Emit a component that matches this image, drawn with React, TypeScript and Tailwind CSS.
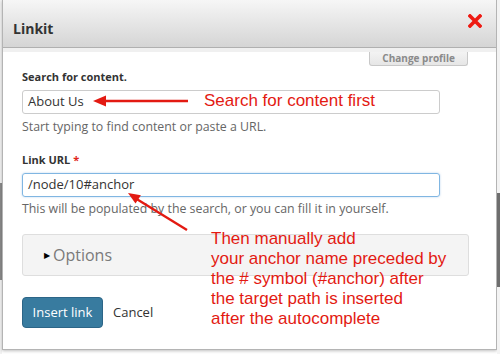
const UI = { fontFamily: '"Open Sans", "Noto Sans", sans-serif' };
const NOTE = { fontFamily: '"Liberation Sans", Arial, sans-serif' };

function CloseIcon() {
  return (
    <svg width="14" height="14" viewBox="0 0 14 14">
      <path d="M2 2 L12 12 M12 2 L2 12" stroke="#ee1a12" strokeWidth="3.6" strokeLinecap="square" />
    </svg>
  );
}

function Arrows() {
  return (
    <svg className="absolute left-0 top-0 pointer-events-none" width="500" height="354" viewBox="0 0 500 354">
      <line x1="188" y1="101" x2="102" y2="101" stroke="#e31a12" strokeWidth="2.5" />
      <polygon points="93,101 106,95.5 106,106.5" fill="#e31a12" />
      <line x1="187" y1="230" x2="135" y2="198" stroke="#e31a12" strokeWidth="2.5" />
      <polygon points="128,193 140.9,195.2 135.5,203.6" fill="#e31a12" />
    </svg>
  );
}

export default function App() {
  return (
    <div className="relative w-[500px] h-[354px] overflow-hidden bg-white flex" style={UI}>
      {/* page behind the dialog */}
      <div className="w-[2px] flex flex-col bg-[#f2f2f2]">
        <div className="h-[183px]" />
        <div className="h-[97px] bg-[#8a8a8a]" />
      </div>

      <div className="w-[495px] h-[350px] bg-white border-x border-b border-[#b4b4b4] shadow-[0_1px_3px_rgba(0,0,0,0.25)] flex flex-col">
        <div className="h-[48px] flex justify-between border-b border-[#b0b0b0] bg-gradient-to-b from-[#f6f6f6] to-[#d5d5d5]">
          <div className="pl-[10px] pt-[19px] text-[14px] leading-[20px] font-bold text-[#333]">Linkit</div>
          <div className="mt-[14px] mr-[14px]">
            <CloseIcon />
          </div>
        </div>
        <div className="h-[4px] bg-[#f0f0f0]" />

        <div className="flex justify-end pr-[28px]">
          <div className="h-[14px] px-[12px] flex items-center rounded-b-[3px] border-x border-b border-[#c8c8c8] bg-gradient-to-b from-[#f3f3f3] to-[#e6e6e6] text-[10px] font-bold text-[#8a8a8a]">
            Change profile
          </div>
        </div>

        <div className="px-[19px] flex flex-col">
          <div className="mt-[3px] text-[11px] leading-[16px] font-bold text-[#333]">Search for content.</div>
          <div className="mt-[5px] w-[418px] h-[24px] flex items-center pl-[5px] border border-[#cccccc] rounded-[3px] text-[13px] text-[#333]">
            About Us
          </div>
          <div className="mt-[4px] text-[12.35px] leading-[17px] text-[#666]">Start typing to find content or paste a URL.</div>

          <div className="mt-[17px] text-[11px] leading-[16px] font-bold text-[#333]">
            Link URL <span className="text-[#e0241b]">*</span>
          </div>
          <div className="mt-[5px] w-[418px] h-[24px] flex items-center pl-[5px] border border-[#80b6e2] rounded-[3px] shadow-[0_0_2px_rgba(100,160,220,0.5)] text-[13px] text-[#333]">
            /node/10#anchor
          </div>
          <div className="mt-[3px] text-[12.35px] leading-[17px] text-[#666]">
            This will be populated by the search, or you can fill it in yourself.
          </div>

          <div className="mt-[17px] w-[447px] h-[42px] flex items-center pl-[21px] bg-[#f4f4f4] border border-[#dedede] rounded-[3px]">
            <span className="text-[8px] text-black mr-[3px]">▶</span>
            <span className="text-[16px] text-[#7a7a7a]">Options</span>
          </div>

          <div className="mt-[21px] flex items-center">
            <div className="w-[81px] h-[31px] flex items-center justify-center rounded-[4px] bg-[#387b9f] border border-[#2c6587] text-[13px] text-white">
              Insert link
            </div>
            <div className="ml-[10px] text-[13px] text-[#333]">Cancel</div>
          </div>
        </div>
      </div>

      <div className="flex-1 flex flex-col bg-[#f3f3f3]">
        <div className="h-[193px]" />
        <div className="h-[94px] bg-[#6e6e6e]" />
      </div>

      {/* annotations */}
      <div className="absolute left-[204px] top-[91px] text-[17px] leading-[20px] text-[#e31a12]" style={NOTE}>
        Search for content first
      </div>
      <div className="absolute left-[211px] top-[229px] text-[17px] leading-[20px] text-[#e31a12]" style={NOTE}>
        Then manually add
        <br />
        your anchor name preceded by
        <br />
        the # symbol (#anchor) after
        <br />
        the target path is inserted
        <br />
        after the autocomplete
      </div>
      <Arrows />
    </div>
  );
}
